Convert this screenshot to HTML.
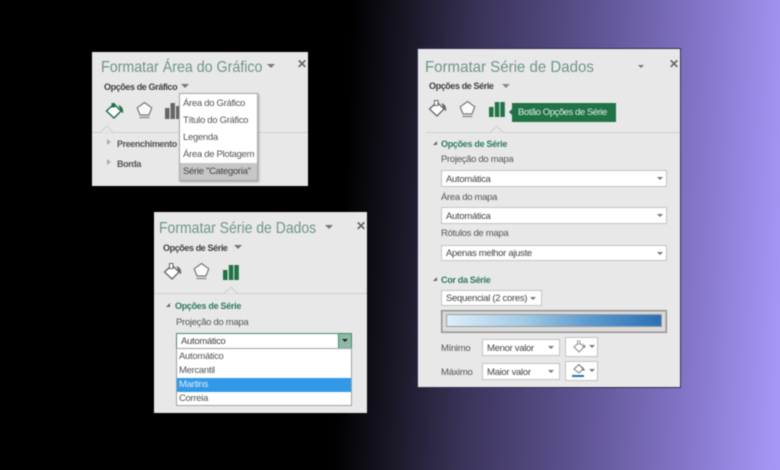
<!DOCTYPE html>
<html><head><meta charset="utf-8"><style>
html,body{margin:0;padding:0}
body{width:780px;height:470px;overflow:hidden;position:relative;background:linear-gradient(92.4deg,#000 0,#000 44%,#15131f 50%,#3a3358 60%,#5d5290 74%,#8475c8 88%,#a596f6 99%);font-family:"Liberation Sans",sans-serif}
#w{position:absolute;left:0;top:0;width:780px;height:470px;filter:blur(.4px)}
.p{position:absolute;background:#e8e8e8;box-sizing:border-box;overflow:hidden}
.p *{position:absolute;white-space:nowrap;box-sizing:border-box}
.t{font-size:16px;color:#6f9686;line-height:20px;transform-origin:0 50%}
.b{font-size:9px;font-weight:bold;color:#404040;line-height:12px;letter-spacing:-.4px}
.g{font-size:9px;font-weight:bold;color:#2f7a5c;line-height:12px;letter-spacing:-.3px}
.l{font-size:9.5px;color:#555;line-height:12px;letter-spacing:-.3px}
.s{background:#fff;border:1px solid #c4c4c4;font-size:9.5px;color:#444;line-height:14px;padding-left:4px;letter-spacing:-.3px}
.a{width:0;height:0;border-left:3px solid transparent;border-right:3px solid transparent;border-top:3.5px solid #777}
.x{font-size:12px;font-weight:bold;color:#666;line-height:12px}
.ln{height:1px;background:#cfcfcf}
.m{font-size:9.5px;color:#555;line-height:14px;padding-left:3px;left:0;width:100%;letter-spacing:-.3px}
svg{overflow:visible}
</style></head><body><div id="w">

<div class="p" style="left:92px;top:52px;width:216px;height:134px">
<div class="t" style="left:9px;top:6px;transform:scaleX(.89)">Formatar Área do Gráfico</div>
<div class="a" style="left:175px;top:12px;border-left-width:4px;border-right-width:4px;border-top-width:4px"></div>
<div class="x" style="left:205px;top:6px">✕</div>
<div class="b" style="left:12px;top:29px">Opções de Gráfico</div>
<div class="a" style="left:89px;top:32px;border-left-width:4px;border-right-width:4px;border-top-width:4px"></div>
<svg style="left:13px;top:48px" width="20" height="20" viewBox="0 0 20 20"><path d="M1.500 11L9 4L16 11L9 18Z" fill="#fff" stroke="#217346" stroke-width="1.500"/><path d="M6.500 3H10V7.500H6.500Z" fill="#217346"/><path d="M13.500 5Q19 7 18 13.500L15.500 10.500Z" fill="#217346"/></svg>
<svg style="left:44px;top:49px" width="17" height="18" viewBox="0 0 17 18"><path d="M8.500 1.500L15.800 6.800L13 14H4L1.200 6.800Z" fill="#fafafa" stroke="#777" stroke-width="1.200" stroke-linejoin="round"/><path d="M3.500 16.500H13.500" stroke="#888" stroke-width="1.300"/></svg>
<svg style="left:73px;top:50px" width="18" height="18"><rect x="0" y="6" width="4.500" height="11" fill="#666"/><rect x="5.500" y="1" width="4.500" height="16" fill="#666"/><rect x="11" y="4" width="4.500" height="13" fill="#666"/></svg>
<div class="ln" style="left:0;top:80px;width:216px"></div>
<svg style="left:6px;top:73px" width="20" height="8"><path d="M2 7.500L9 1L15 7.500" fill="#e8e8e8" stroke="#cfcfcf"/></svg>
<div style="left:15px;top:87px;width:0;height:0;border-top:3.500px solid transparent;border-bottom:3.500px solid transparent;border-left:4px solid #aaa"></div>
<div class="b" style="left:25px;top:86px;color:#555">Preenchimento</div>
<div style="left:15px;top:107px;width:0;height:0;border-top:3.500px solid transparent;border-bottom:3.500px solid transparent;border-left:4px solid #aaa"></div>
<div class="b" style="left:25px;top:106px;color:#555">Borda</div>
<div style="left:87px;top:41px;width:79px;height:88px;background:#fff;border:1px solid #a8a8a8;box-shadow:1px 1px 2px rgba(0,0,0,.3)">
<div class="m" style="top:3px">Área do Gráfico</div>
<div class="m" style="top:20px">Título do Gráfico</div>
<div class="m" style="top:37px">Legenda</div>
<div class="m" style="top:54px">Área de Plotagem</div>
<div class="m" style="top:69px;height:17px;background:#c6c6c6;line-height:18px;color:#444">Série "Categoria"</div>
</div>
</div>

<div class="p" style="left:154px;top:212px;width:213px;height:201px">
<div class="t" style="left:5px;top:7px;transform:scaleX(.875)">Formatar Série de Dados</div>
<div class="a" style="left:171px;top:13px;border-left-width:4px;border-right-width:4px;border-top-width:4px"></div>
<div class="x" style="left:202px;top:8px">✕</div>
<div class="b" style="left:9px;top:30px">Opções de Série</div>
<div class="a" style="left:80px;top:33px;border-left-width:4px;border-right-width:4px;border-top-width:4px"></div>
<svg style="left:9px;top:49px" width="20" height="20" viewBox="0 0 20 20"><path d="M1.500 11L9 4L16 11L9 18Z" fill="#fff" stroke="#666" stroke-width="1.300"/><path d="M6.500 2.500H10V7.500H6.500Z" fill="#fff" stroke="#666"/><path d="M13.500 5Q19 7 18 13.500L15.500 10.500Z" fill="#666"/></svg>
<svg style="left:39px;top:50px" width="17" height="18" viewBox="0 0 17 18"><path d="M8.500 1.500L15.800 6.800L13 14H4L1.200 6.800Z" fill="#fafafa" stroke="#777" stroke-width="1.200" stroke-linejoin="round"/><path d="M3.500 16.500H13.500" stroke="#888" stroke-width="1.300"/></svg>
<svg style="left:69px;top:52px" width="17" height="17"><rect x="0" y="6" width="4.500" height="10" fill="#217346"/><rect x="5.800" y="1" width="4.500" height="15" fill="#217346"/><rect x="11.300" y="1" width="4.500" height="15" fill="#217346"/></svg>
<div class="ln" style="left:0;top:81px;width:213px"></div>
<svg style="left:68px;top:74px" width="20" height="8"><path d="M2 7.500L9 1L15 7.500" fill="#e8e8e8" stroke="#cfcfcf"/></svg>
<div style="left:12px;top:91px;width:0;height:0;border-bottom:4px solid #666;border-left:4px solid transparent"></div>
<div class="g" style="left:21px;top:88px">Opções de Série</div>
<div class="l" style="left:22px;top:105px">Projeção do mapa</div>
<div class="s" style="left:22px;top:121px;width:176px;height:16px;border-color:#3f8f6b;line-height:15px">Automático</div>
<div style="left:184px;top:121px;width:14px;height:16px;background:#8fb8a5;border:1px solid #3f8f6b"></div>
<div class="a" style="left:188px;top:127px;border-top-color:#222"></div>
<div style="left:22px;top:136px;width:176px;height:58px;background:#fff;border:1px solid #a0a0a0">
<div class="m" style="top:1px;padding-left:2px">Automático</div>
<div class="m" style="top:15px;padding-left:2px">Mercantil</div>
<div class="m" style="top:29px;height:14px;background:#3298e8;color:#d8ecfa;padding-left:2px">Martins</div>
<div class="m" style="top:43px;padding-left:2px">Correia</div>
</div>
</div>

<div class="p" style="left:417px;top:48px;width:264px;height:340px">
<div class="t" style="left:8px;top:10px;transform:scaleX(.94)">Formatar Série de Dados</div>
<div class="a" style="left:221px;top:17px"></div>
<div class="x" style="left:252px;top:10px">✕</div>
<div class="b" style="left:12px;top:32px">Opções de Série</div>
<div class="a" style="left:85px;top:36px;border-left-width:4px;border-right-width:4px;border-top-width:4px;border-top-color:#888"></div>
<svg style="left:11px;top:50px" width="20" height="20" viewBox="0 0 20 20"><path d="M1.500 11L9 4L16 11L9 18Z" fill="#fff" stroke="#666" stroke-width="1.300"/><path d="M6.500 2.500H10V7.500H6.500Z" fill="#fff" stroke="#666"/><path d="M13.500 5Q19 7 18 13.500L15.500 10.500Z" fill="#666"/></svg>
<svg style="left:42px;top:52px" width="17" height="18" viewBox="0 0 17 18"><path d="M8.500 1.500L15.800 6.800L13 14H4L1.200 6.800Z" fill="#fafafa" stroke="#777" stroke-width="1.200" stroke-linejoin="round"/><path d="M3.500 16.500H13.500" stroke="#888" stroke-width="1.300"/></svg>
<svg style="left:72px;top:53px" width="17" height="17"><rect x="0" y="6" width="4.500" height="10" fill="#217346"/><rect x="5.800" y="1" width="4.500" height="15" fill="#217346"/><rect x="11.300" y="1" width="4.500" height="15" fill="#217346"/></svg>
<div style="left:92px;top:60px;width:0;height:0;border-top:4px solid transparent;border-bottom:4px solid transparent;border-right:4px solid #217346"></div>
<div style="left:95px;top:55px;width:104px;height:19px;background:#217346;color:#dcece4;font-size:9.500px;line-height:19px;padding-left:6px;letter-spacing:-.45px">Botão Opções de Série</div>
<div class="ln" style="left:9px;top:84px;width:255px"></div>
<svg style="left:71px;top:77px" width="20" height="8"><path d="M2 7.500L9 1L15 7.500" fill="#e8e8e8" stroke="#cfcfcf"/></svg>
<div style="left:16px;top:93px;width:0;height:0;border-bottom:4px solid #666;border-left:4px solid transparent"></div>
<div class="g" style="left:24px;top:90px">Opções de Série</div>
<div class="l" style="left:24px;top:106px">Projeção do mapa</div>
<div class="s" style="left:24px;top:122px;width:226px;height:17px;line-height:17px">Automática</div><div class="a" style="left:240px;top:129px"></div>
<div class="l" style="left:24px;top:144px">Área do mapa</div>
<div class="s" style="left:24px;top:159px;width:226px;height:17px;line-height:17px">Automática</div><div class="a" style="left:240px;top:166px"></div>
<div class="l" style="left:24px;top:180px">Rótulos de mapa</div>
<div class="s" style="left:24px;top:197px;width:226px;height:16px;line-height:15px">Apenas melhor ajuste</div><div class="a" style="left:240px;top:204px"></div>
<div style="left:16px;top:229px;width:0;height:0;border-bottom:4px solid #666;border-left:4px solid transparent"></div>
<div class="g" style="left:24px;top:226px">Cor da Série</div>
<div class="s" style="left:24px;top:242px;width:101px;height:16px;line-height:15px">Sequencial (2 cores)</div><div class="a" style="left:113px;top:249px"></div>
<div style="left:24px;top:262px;width:226px;height:23px;background:#dcdcdc;border:1px solid #8a8a8a;box-shadow:inset 0 0 0 1px #bbb"></div>
<div style="left:29px;top:266px;width:216px;height:13px;background:linear-gradient(90deg,#dceefa,#a5cbe6 35%,#5f9ccf 65%,#2a70b5);border:1px solid #9a9a9a"></div>
<div class="l" style="left:24px;top:295px">Mínimo</div>
<div class="s" style="left:65px;top:291px;width:78px;height:17px;line-height:17px">Menor valor</div><div class="a" style="left:131px;top:298px"></div>
<div class="s" style="left:148px;top:289px;width:33px;height:20px"></div>
<svg style="left:155px;top:292px" width="16" height="14" viewBox="0 0 16 14"><path d="M2 7L7 2.500L12 7L7 12Z" fill="#fff" stroke="#888"/><path d="M5.500 1H8V4H5.500Z" fill="#fff" stroke="#888" stroke-width=".8"/><path d="M11 3L14 7L12 8Z" fill="#888"/></svg>
<div class="a" style="left:172px;top:297px"></div>
<div class="l" style="left:24px;top:319px">Máximo</div>
<div class="s" style="left:65px;top:315px;width:78px;height:17px;line-height:17px">Maior valor</div><div class="a" style="left:131px;top:322px"></div>
<div class="s" style="left:148px;top:313px;width:33px;height:20px"></div>
<svg style="left:154px;top:315px" width="16" height="15" viewBox="0 0 16 15"><path d="M3 6L8 1.500L12 6L8 10Z" fill="#fff" stroke="#777"/><path d="M11 3L14 7L12 8Z" fill="#777"/><rect x="1" y="12" width="12" height="2" fill="#2a70b5"/></svg>
<div class="a" style="left:172px;top:321px"></div>
</div>

<div style="position:absolute;left:417px;top:48px;width:264px;height:340px;box-sizing:border-box;border:1px solid #333050;border-right-width:1.500px"></div>
</div></body></html>
